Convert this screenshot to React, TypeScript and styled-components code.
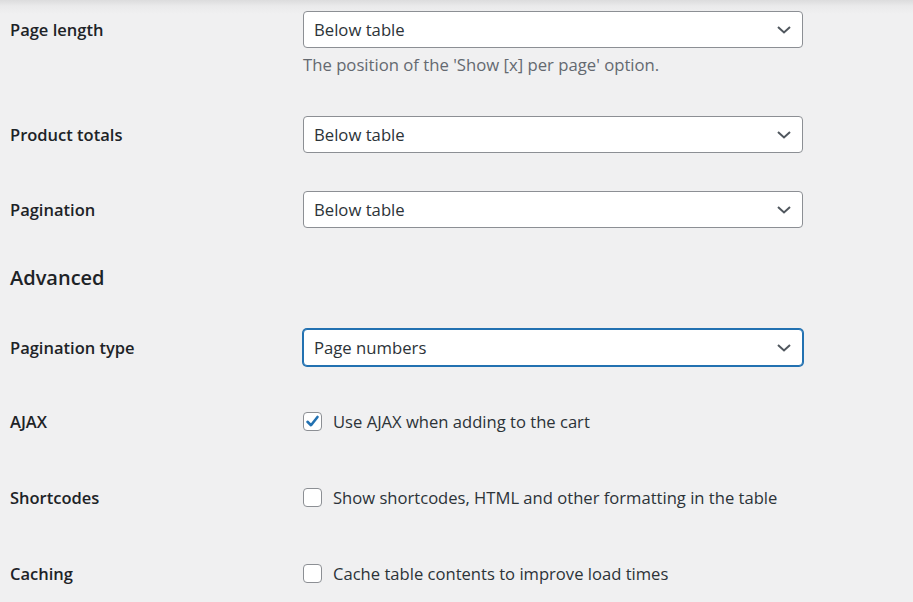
import React from "react";
import styled, { createGlobalStyle } from "styled-components";

const Global = createGlobalStyle`
  html, body { margin: 0; padding: 0; background: #f0f0f1; }
  body { font-family: "Open Sans", "Noto Sans", sans-serif; color: #1d2327; }
`;

const Page = styled.div`
  width: 913px;
  height: 602px;
  overflow: hidden;
  background: linear-gradient(to bottom, #dcdcdd 0px, #eaeaeb 6px, #f0f0f1 14px);
  padding-left: 10px;
  box-sizing: border-box;
`;

const Shift = styled.div`
  margin-top: -8px;
`;

const Row = styled.div<{ $pt?: number; $pb?: number }>`
  display: grid;
  grid-template-columns: 293px 500px;
  padding-top: ${(p) => p.$pt ?? 19}px;
  padding-bottom: ${(p) => p.$pb ?? 19}px;
`;

const Label = styled.div<{ $h?: number }>`
  font-size: 16.5px;
  font-weight: 600;
  line-height: ${(p) => p.$h ?? 37}px;
  color: #1d2327;
`;

const Field = styled.div`
  display: flex;
  flex-direction: column;
`;

const SelectBox = styled.div<{ $focus?: boolean }>`
  box-sizing: border-box;
  height: 37px;
  width: 500px;
  background: #fff;
  border: 1px solid ${(p) => (p.$focus ? "#2271b1" : "#8c8f94")};
  box-shadow: ${(p) => (p.$focus ? "0 0 0 1px #2271b1" : "none")};
  border-radius: 4px;
  display: flex;
  align-items: center;
  justify-content: space-between;
  padding: 0 10px 0 10px;
  font-size: 16.7px;
  color: #2c3338;
`;

const Chevron = () => (
  <svg width="16" height="10" viewBox="0 0 16 10">
    <path d="M2 2 L8 7.5 L14 2" fill="none" stroke="#50575e" strokeWidth="2" />
  </svg>
);

const Description = styled.p`
  margin: 4px 0 0;
  font-size: 16.7px;
  line-height: 26px;
  color: #646970;
`;

const Heading = styled.h2`
  margin: 0;
  padding: 16px 0 0 0;
  font-size: 20px;
  font-weight: 600;
  line-height: 30px;
  color: #1d2327;
`;

const CheckLine = styled.label`
  display: flex;
  align-items: center;
  gap: 11px;
  height: 39px;
  font-size: 16.6px;
  color: #2c3338;
`;

const Box = styled.span<{ $checked?: boolean }>`
  box-sizing: border-box;
  width: 19px;
  height: 19px;
  border: 1px solid #8c8f94;
  border-radius: 4px;
  background: #fff;
  display: inline-flex;
  align-items: center;
  justify-content: center;
`;

const Check = () => (
  <svg width="15" height="15" viewBox="0 0 15 15">
    <path d="M2.5 7.8 L6 11.2 L12.5 3" fill="none" stroke="#2271b1" strokeWidth="2.6" strokeLinecap="round" strokeLinejoin="round" />
  </svg>
);

const Select = ({ value, focus }: { value: string; focus?: boolean }) => (
  <SelectBox $focus={focus}>
    <span>{value}</span>
    <Chevron />
  </SelectBox>
);

const Checkbox = ({ text, checked }: { text: string; checked?: boolean }) => (
  <CheckLine>
    <Box $checked={checked}>{checked && <Check />}</Box>
    <span>{text}</span>
  </CheckLine>
);

export default function App() {
  return (
    <>
      <Global />
      <Page>
        <Shift>
          <Row>
            <Label>Page length</Label>
            <Field>
              <Select value="Below table" />
              <Description>The position of the 'Show [x] per page' option.</Description>
            </Field>
          </Row>
          <Row>
            <Label>Product totals</Label>
            <Field>
              <Select value="Below table" />
            </Field>
          </Row>
          <Row>
            <Label>Pagination</Label>
            <Field>
              <Select value="Below table" />
            </Field>
          </Row>
          <Heading>Advanced</Heading>
          <Row $pt={36}>
            <Label>Pagination type</Label>
            <Field>
              <Select value="Page numbers" focus />
            </Field>
          </Row>
          <Row $pt={17} $pb={18}>
            <Label $h={39}>AJAX</Label>
            <Field>
              <Checkbox text="Use AJAX when adding to the cart" checked />
            </Field>
          </Row>
          <Row $pb={18}>
            <Label $h={39}>Shortcodes</Label>
            <Field>
              <Checkbox text="Show shortcodes, HTML and other formatting in the table" />
            </Field>
          </Row>
          <Row>
            <Label $h={39}>Caching</Label>
            <Field>
              <Checkbox text="Cache table contents to improve load times" />
            </Field>
          </Row>
        </Shift>
      </Page>
    </>
  );
}
